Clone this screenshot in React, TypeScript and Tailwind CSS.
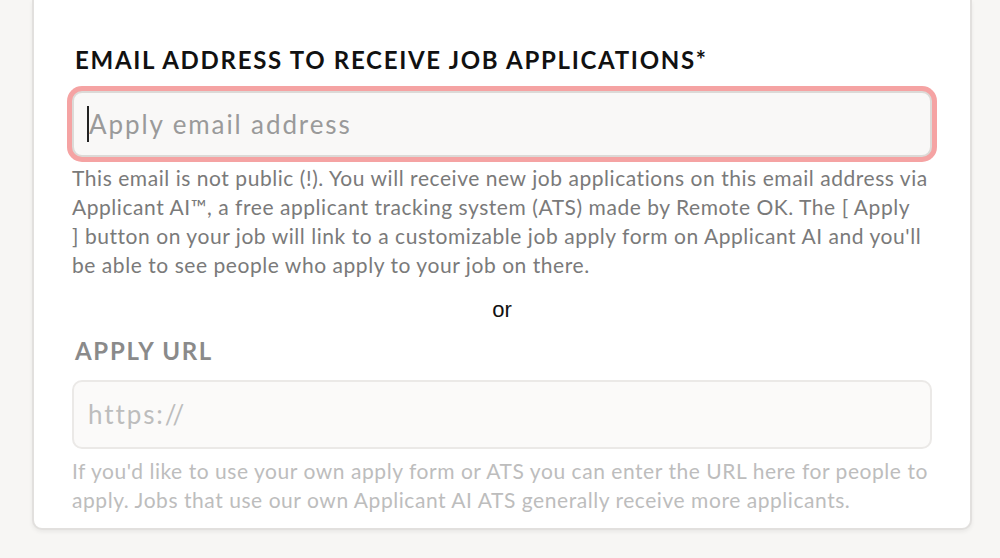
export default function App() {
  return (
    <div className="min-h-[558px] w-[1000px] bg-[#f7f6f4] pb-[30px] pl-[32px] pr-[28px] font-['Lato','Noto_Sans',sans-serif]">
      <div className="rounded-b-[10px] border-2 border-t-0 border-[#e2e0de] bg-white px-[38px] pb-[14px] pt-[44px] shadow-[0_2px_4px_rgba(0,0,0,0.06)]">
        <label className="block pl-[3px] text-[24px] font-bold uppercase leading-[32px] tracking-[1.7px] text-[#111]">
          Email address to receive job applications*
        </label>
        <div className="relative mt-[15px] flex h-[66px] items-center rounded-[10px] border-2 border-[#dcdad7] bg-[#f9f8f7] px-[13px] shadow-[0_0_0_5px_#f5a3a3]">
          <span className="h-[36px] w-[2px] bg-[#222]" />
          <span className="text-[26px] tracking-[1.9px] text-[#9a9a9a]">Apply email address</span>
        </div>
        <p className="mt-[6px] whitespace-nowrap text-[21px] leading-[29px] tracking-[0.55px] text-[#7a7a7a]">
          This email is not public (!). You will receive new job applications on this email address via
          <br />
          Applicant AI™, a free applicant tracking system (ATS) made by Remote OK. The [ Apply
          <br />
          ] button on your job will link to a customizable job apply form on Applicant AI and you'll
          <br />
          be able to see people who apply to your job on there.
        </p>
        <div className="mt-[16px] text-center font-['Liberation_Sans',sans-serif] text-[22px] leading-[30px] text-[#111]">or</div>
        <label className="mt-[10px] block pl-[3px] text-[24px] font-bold uppercase leading-[32px] tracking-[1.7px] text-[#8a8a8a]">
          Apply URL
        </label>
        <div className="mt-[13px] flex h-[69px] items-center rounded-[10px] border-2 border-[#ebe9e7] bg-[#fbfaf9] px-[14px]">
          <span className="text-[26px] tracking-[1.9px] text-[#bdbdbd]">https://</span>
        </div>
        <p className="mt-[7px] whitespace-nowrap text-[21px] leading-[29px] tracking-[0.55px] text-[#bdbdbd]">
          If you'd like to use your own apply form or ATS you can enter the URL here for people to
          <br />
          apply. Jobs that use our own Applicant AI ATS generally receive more applicants.
        </p>
      </div>
    </div>
  )
}
